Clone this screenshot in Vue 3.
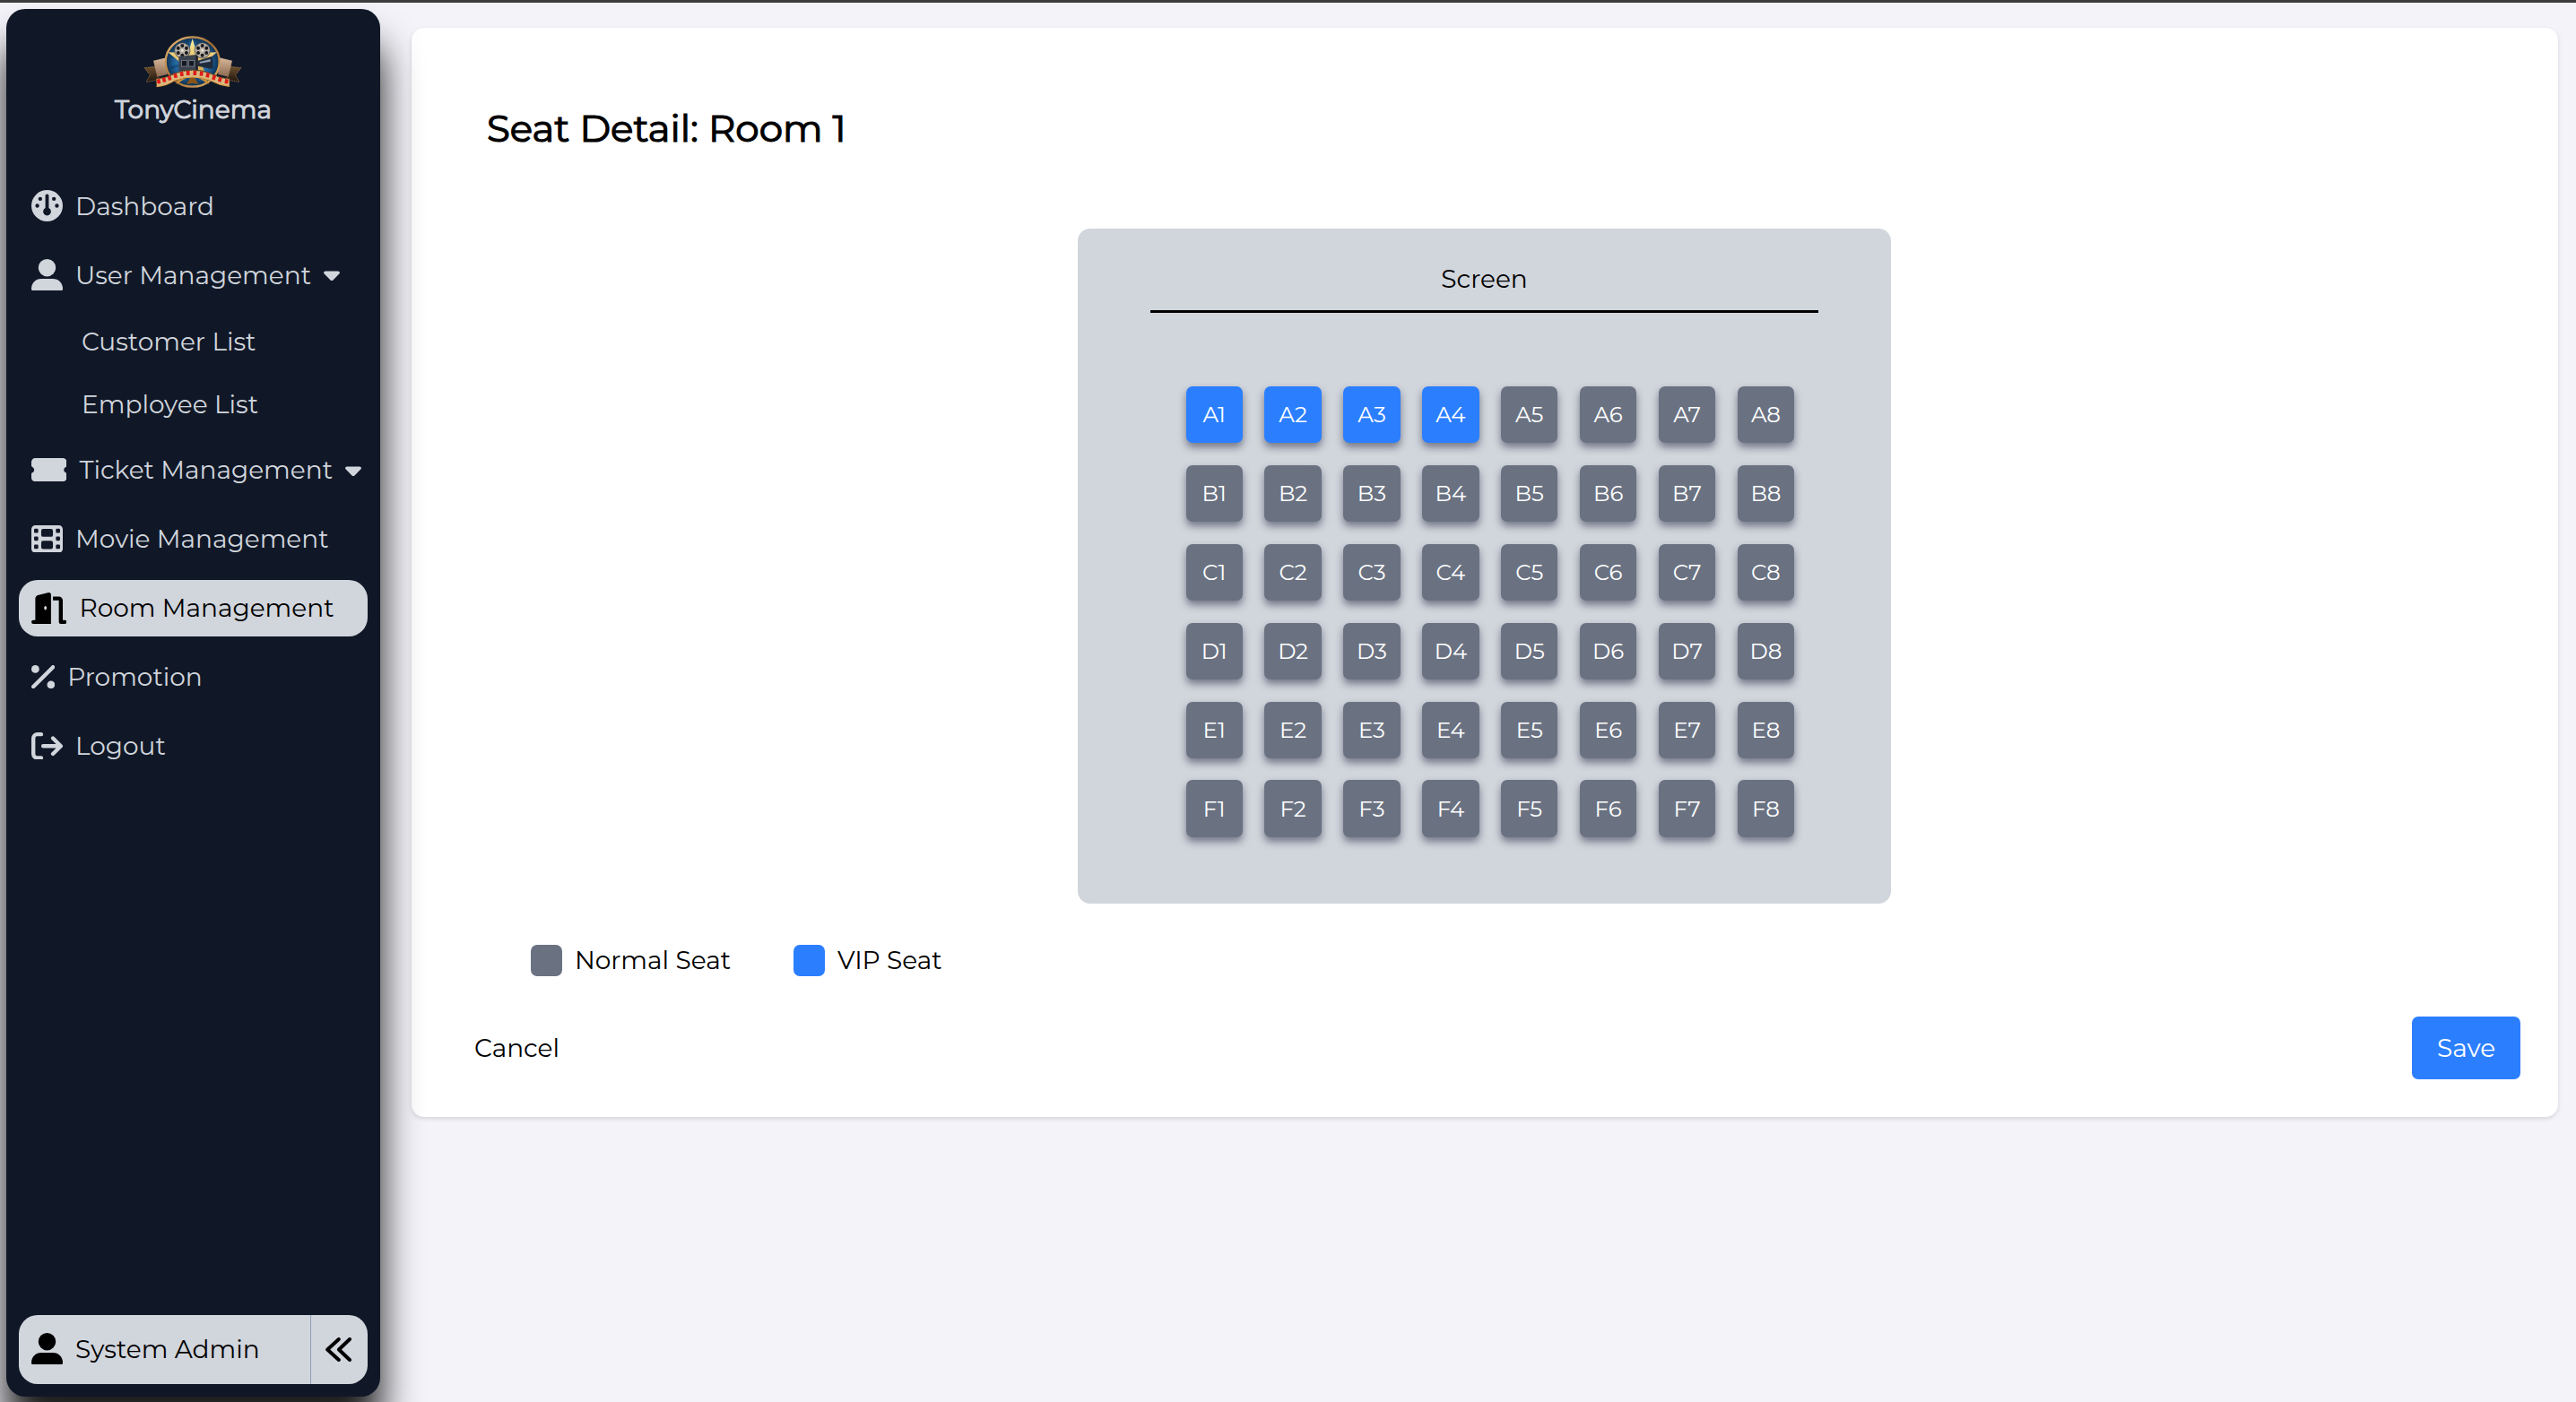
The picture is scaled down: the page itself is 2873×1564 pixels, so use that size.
<script setup>
const seatRows = ['A', 'B', 'C', 'D', 'E', 'F']
const seatCols = [1, 2, 3, 4, 5, 6, 7, 8]
const vipSeats = new Set(['A1', 'A2', 'A3', 'A4'])

const seats = seatRows.flatMap((row) =>
  seatCols.map((col) => ({ code: `${row}${col}`, vip: vipSeats.has(`${row}${col}`) }))
)

// Film strip frames following the arc of the logo ribbon
const frames = [
  [111, 195, -10], [129, 190, -14], [147, 184, -16], [167, 176, -14], [188, 170, -9], [209, 167, -3],
  [232, 167, 2], [254, 169, 7], [275, 174, 12], [296, 182, 16], [316, 189, 14], [338, 195, 10]
]
const rays = [0, 30, 60, 90, 120, 150, 180, 210, 240, 270, 300, 330]
const reelHoles = [0, 60, 120, 180, 240, 300]
</script>

<template>
  <div class="page">
    <aside class="sidebar">
      <div class="brand">
        <svg class="logo" viewBox="60 40 330 180">
          <defs>
            <linearGradient id="gold" x1="0" y1="0" x2="1" y2="1">
              <stop offset="0" stop-color="#f0c078" />
              <stop offset=".5" stop-color="#a06a30" />
              <stop offset="1" stop-color="#e8b870" />
            </linearGradient>
            <linearGradient id="star" x1="0" y1="0" x2="0" y2="1">
              <stop offset="0" stop-color="#fff0a0" />
              <stop offset="1" stop-color="#c98a30" />
            </linearGradient>
            <radialGradient id="sky">
              <stop offset="0" stop-color="#4fa0dc" />
              <stop offset=".7" stop-color="#1f5f96" />
              <stop offset="1" stop-color="#0e2c4a" />
            </radialGradient>
            <linearGradient id="tail" x1="0" y1="0" x2="0" y2="1">
              <stop offset="0" stop-color="#6a4e2e" />
              <stop offset="1" stop-color="#20160e" />
            </linearGradient>
            <linearGradient id="ticket" x1="0" y1="0" x2="0" y2="1">
              <stop offset="0" stop-color="#d8b89a" />
              <stop offset="1" stop-color="#8c6a50" />
            </linearGradient>
          </defs>
          <path d="M63 150L100 146L112 190L70 197L82 174Z" fill="url(#tail)" stroke="#b08850" stroke-width="2" stroke-dasharray="4 2" />
          <path d="M387 150L350 146L338 190L380 197L368 174Z" fill="url(#tail)" stroke="#b08850" stroke-width="2" stroke-dasharray="4 2" />
          <path d="M93 126L140 115V172L106 180Z" fill="url(#ticket)" />
          <path d="M357 126L310 115V172L344 180Z" fill="url(#ticket)" />
          <ellipse cx="224" cy="130" rx="90" ry="83" fill="url(#sky)" stroke="url(#gold)" stroke-width="7" />
          <path v-for="r in rays" :key="r" d="M224 130L219 54L229 54Z" fill="#0c3358" opacity=".45" :transform="`rotate(${r + 15} 224 130)`" />
          <path d="M224 52L238 100L306 98L256 140L278 204L224 172L170 204L192 140L142 98L210 100Z" fill="url(#star)" />
          <path d="M224 172L203 206Q224 196 245 206Z" fill="#8a5518" />
          <g v-for="cx in [190, 257]" :key="cx">
            <circle :cx="cx" cy="92" r="26" fill="#b5aea4" stroke="#3a3634" stroke-width="2" />
            <circle v-for="h in reelHoles" :key="h" :cx="cx" cy="76" r="6" fill="#1c1b20" :transform="`rotate(${h} ${cx} 92)`" />
            <circle :cx="cx" cy="92" r="4" fill="#f0e8dc" />
          </g>
          <path d="M178 112L236 106L242 112V160H178Z" fill="#3c4350" />
          <path d="M236 106L242 112V160L236 162Z" fill="#171b24" />
          <rect x="187" y="126" width="19" height="19" fill="#141821" stroke="#8b93a0" stroke-width="2" />
          <rect x="211" y="126" width="19" height="19" fill="#141821" stroke="#8b93a0" stroke-width="2" />
          <path d="M242 126L288 112Q298 134 288 154L242 144Z" fill="#202b3c" />
          <path d="M248 130L284 121V129L248 135Z" fill="#8e9eb2" />
          <path d="M102 186Q135 184 165 168Q224 146 284 168Q315 184 348 186V213Q315 210 282 192Q224 172 167 192Q135 212 104 214Z" fill="#d9ba80" stroke="#4c3216" stroke-width="2" />
          <path d="M104 213Q135 211 167 191Q224 171 282 191Q315 209 348 212" fill="none" stroke="#e7a24c" stroke-width="3" />
          <path d="M103 187Q135 185 165 169Q224 147 284 169Q315 185 347 187" fill="none" stroke="#5a4326" stroke-width="4" stroke-dasharray="3 3" />
          <rect v-for="f in frames" :key="f[0]" :x="f[0] - 5.5" :y="f[1] - 7" width="11" height="15" fill="#e01c18" :transform="`rotate(${f[2]} ${f[0]} ${f[1]})`" />
        </svg>
        <h1 class="brand-name">TonyCinema</h1>
      </div>

      <nav class="menu">
        <a class="item">
          <svg width="35" height="35" viewBox="0 0 512 512">
            <path fill="currentColor" fill-rule="evenodd" d="M256 0a256 256 0 1 1 0 512a256 256 0 1 1 0-512ZM112 144a32 32 0 1 0 64 0a32 32 0 1 0-64 0ZM336 144a32 32 0 1 0 64 0a32 32 0 1 0-64 0ZM64 256a32 32 0 1 0 64 0a32 32 0 1 0-64 0ZM384 256a32 32 0 1 0 64 0a32 32 0 1 0-64 0ZM256 64c-15 0-28 11-28 26V294a64 64 0 1 0 56 0V90c0-15-13-26-28-26Z" />
          </svg>
          <span>Dashboard</span>
        </a>
        <a class="item">
          <svg width="35" height="35" viewBox="0 0 512 512">
            <g fill="currentColor">
              <circle cx="256" cy="142" r="142" />
              <path d="M0 482C0 392 70 322 160 322H352C442 322 512 392 512 482V490C512 504 504 512 490 512H22C8 512 0 504 0 490Z" />
            </g>
          </svg>
          <span>User Management</span>
          <svg class="caret" width="18" height="12" viewBox="0 0 18 12"><path fill="currentColor" d="M2 .5H16C17.8.5 18.5 2.4 17.3 3.6L10.5 10.4C9.6 11.3 8.4 11.3 7.5 10.4L.7 3.6C-.5 2.4.2.5 2 .5Z" /></svg>
        </a>
        <div class="submenu">
          <a class="subitem">Customer List</a>
          <a class="subitem">Employee List</a>
        </div>
        <a class="item">
          <svg width="39.4" height="26.25" viewBox="0 0 576 384">
            <path fill="currentColor" d="M64 0H512a64 64 0 0 1 64 64V126c0 9-7 15-15 19a51 51 0 0 0 0 94c8 4 15 10 15 19v62a64 64 0 0 1-64 64H64a64 64 0 0 1-64-64V258c0-9 7-15 15-19a51 51 0 0 0 0-94C7 141 0 135 0 126V64A64 64 0 0 1 64 0Z" />
          </svg>
          <span>Ticket Management</span>
          <svg class="caret" width="18" height="12" viewBox="0 0 18 12"><path fill="currentColor" d="M2 .5H16C17.8.5 18.5 2.4 17.3 3.6L10.5 10.4C9.6 11.3 8.4 11.3 7.5 10.4L.7 3.6C-.5 2.4.2.5 2 .5Z" /></svg>
        </a>
        <a class="item">
          <svg width="35" height="30.6" viewBox="0 0 512 448">
            <path fill="currentColor" fill-rule="evenodd" d="M64 0H448a64 64 0 0 1 64 64V384a64 64 0 0 1-64 64H64a64 64 0 0 1-64-64V64A64 64 0 0 1 64 0ZM60 56a16 16 0 0 0-16 16v36a16 16 0 0 0 16 16h36a16 16 0 0 0 16-16V72a16 16 0 0 0-16-16ZM60 184a16 16 0 0 0-16 16v36a16 16 0 0 0 16 16h36a16 16 0 0 0 16-16v-36a16 16 0 0 0-16-16ZM60 316a16 16 0 0 0-16 16v36a16 16 0 0 0 16 16h36a16 16 0 0 0 16-16v-36a16 16 0 0 0-16-16ZM416 56a16 16 0 0 0-16 16v36a16 16 0 0 0 16 16h36a16 16 0 0 0 16-16V72a16 16 0 0 0-16-16ZM416 184a16 16 0 0 0-16 16v36a16 16 0 0 0 16 16h36a16 16 0 0 0 16-16v-36a16 16 0 0 0-16-16ZM416 316a16 16 0 0 0-16 16v36a16 16 0 0 0 16 16h36a16 16 0 0 0 16-16v-36a16 16 0 0 0-16-16ZM192 60a32 32 0 0 0-32 32v64a32 32 0 0 0 32 32h128a32 32 0 0 0 32-32V92a32 32 0 0 0-32-32ZM192 252a32 32 0 0 0-32 32v72a32 32 0 0 0 32 32h128a32 32 0 0 0 32-32v-72a32 32 0 0 0-32-32Z" />
          </svg>
          <span>Movie Management</span>
        </a>
        <a class="item active">
          <svg width="39.4" height="35" viewBox="0 0 576 512">
            <g fill="currentColor">
              <path fill-rule="evenodd" d="M320 512H32a32 32 0 0 1 0-64H64V97c0-25 17-47 41-54L280 1c20-5 40 10 40 31ZM229 221c-12 0-21 14-21 32s9 32 21 32s21-14 21-32s-9-32-21-32Z" />
              <path d="M352 64H448a64 64 0 0 1 64 64V448H544a32 32 0 0 1 0 64H480a32 32 0 0 1-32-32V128H352Z" />
            </g>
          </svg>
          <span>Room Management</span>
        </a>
        <a class="item">
          <svg width="26.25" height="26.25" viewBox="0 0 384 384">
            <g fill="currentColor">
              <circle cx="64" cy="64" r="64" />
              <circle cx="320" cy="320" r="64" />
              <path d="M32 352L352 32" stroke="currentColor" stroke-width="64" stroke-linecap="round" />
            </g>
          </svg>
          <span>Promotion</span>
        </a>
        <a class="item">
          <svg width="35" height="30.6" viewBox="0 0 512 448">
            <path fill="none" stroke="currentColor" stroke-width="64" stroke-linecap="round" stroke-linejoin="round" d="M160 32H96A64 64 0 0 0 32 96V352A64 64 0 0 0 96 416H160M192 224H470M352 96L480 224L352 352" />
          </svg>
          <span>Logout</span>
        </a>
      </nav>

      <div class="account">
        <div class="account-user">
          <svg width="35" height="35" viewBox="0 0 512 512">
            <g fill="currentColor">
              <circle cx="256" cy="142" r="142" />
              <path d="M0 482C0 392 70 322 160 322H352C442 322 512 392 512 482V490C512 504 504 512 490 512H22C8 512 0 504 0 490Z" />
            </g>
          </svg>
          <span>System Admin</span>
        </div>
        <button class="collapse" aria-label="Collapse">
          <svg width="29" height="27" viewBox="0 0 29 27">
            <path d="M14.8 2L2.2 13.5L14.8 25M27 2L15 13.5L27 25" fill="none" stroke="currentColor" stroke-width="4" stroke-linecap="round" stroke-linejoin="round" />
          </svg>
        </button>
      </div>
    </aside>

    <main class="content">
      <section class="card">
        <h2 class="title">Seat Detail: Room 1</h2>

        <div class="hall">
          <div class="screen">Screen</div>
          <div class="seats">
            <button v-for="s in seats" :key="s.code" class="seat" :class="{ vip: s.vip }">{{ s.code }}</button>
          </div>
        </div>

        <div class="legend">
          <div class="legend-item"><i class="swatch"></i>Normal Seat</div>
          <div class="legend-item"><i class="swatch vip"></i>VIP Seat</div>
        </div>

        <div class="actions">
          <button class="cancel">Cancel</button>
          <button class="save">Save</button>
        </div>
      </section>
    </main>
  </div>
</template>

<style>
body {
  margin: 0;
  background: #f3f3f9;
}
</style>

<style scoped>
.page {
  box-sizing: border-box;
  display: flex;
  align-items: flex-start;
  width: 100%;
  height: 1564px;
  padding: 7px 20px 0 7px;
  border-top: 3px solid #3c3c3c;
  background: #f3f3f9;
  overflow: hidden;
  font-family: Montserrat, Inter, sans-serif;
  font-size: 28px;
  line-height: 42px;
  color: #000;
}

button {
  border: 0;
  padding: 0;
  background: none;
  color: inherit;
  font: inherit;
}

.sidebar {
  position: relative;
  z-index: 1;
  box-sizing: border-box;
  flex: none;
  display: flex;
  flex-direction: column;
  width: 417px;
  height: 1548px;
  padding: 28px 14px 14px;
  border-radius: 21px;
  background: #101827;
  color: #d1d5dc;
  box-shadow: 0 40px 44px rgba(0, 0, 0, 0.9);
}

.brand {
  display: flex;
  flex-direction: column;
  align-items: center;
  height: 160px;
}

.logo {
  width: 110px;
  height: 60px;
  margin: 1px 1px 0 0;
}

.brand-name {
  margin: 2px 0 0;
  font-size: 28px;
  font-weight: 400;
  line-height: 42px;
  -webkit-text-stroke: 1px currentColor;
}

.menu {
  display: flex;
  flex-direction: column;
}

.item {
  box-sizing: border-box;
  display: flex;
  align-items: center;
  gap: 14px;
  height: 63px;
  margin-bottom: 14px;
  padding: 0 14px;
  border-radius: 21px;
  white-space: nowrap;
}

.item svg {
  flex: none;
}

.item .caret {
  margin: 3px 0 0;
}

.item.active {
  background: #d1d5dc;
  color: #000;
}

.submenu {
  display: flex;
  flex-direction: column;
  margin: -6px 0 6.55px;
  padding-left: 70px;
}

.subitem {
  height: 70px;
  line-height: 70px;
}

.account {
  display: flex;
  height: 77px;
  margin-top: auto;
  border-radius: 21px;
  background: #d1d5dc;
  color: #000;
}

.account-user {
  box-sizing: border-box;
  display: flex;
  align-items: center;
  gap: 14px;
  width: 325px;
  padding: 0 0 2px 14px;
}

.collapse {
  box-sizing: border-box;
  display: flex;
  flex: 1;
  align-items: center;
  justify-content: center;
  padding: 0 2px 1px 0;
  border-left: 1px solid #90a1b9;
}

.content {
  flex: 1;
  padding: 21px 0 0 35px;
}

.card {
  box-sizing: border-box;
  display: flex;
  flex-direction: column;
  height: 1215px;
  padding: 80px 42px 42px;
  border-radius: 14px;
  background: #fff;
  box-shadow: 0 2px 5px rgba(0, 0, 0, 0.13);
}

.title {
  margin: 0 0 0 42px;
  font-size: 42px;
  font-weight: 400;
  line-height: 64px;
  -webkit-text-stroke: 1.2px currentColor;
}

.hall {
  box-sizing: border-box;
  align-self: center;
  width: 907px;
  height: 753px;
  margin: 80px 1px 0 0;
  padding: 35px 81px 0;
  border-radius: 14px;
  background: #d1d5dc;
}

.screen {
  height: 56px;
  border-bottom: 3px solid #000;
  text-align: center;
}

.seats {
  display: grid;
  grid-template-columns: repeat(8, 63.4px);
  grid-auto-rows: 63.4px;
  gap: 24.5px;
  margin: 82px 0 0 39.5px;
}

.seat {
  border-radius: 7px;
  background: #6a7282;
  color: #fff;
  font-size: 24.5px;
  line-height: 35px;
  box-shadow: 0 5px 9px rgba(25, 30, 55, 0.5);
}

.vip {
  background: #2b7fff;
}

.legend {
  display: flex;
  gap: 70px;
  margin: 42px 0 0 91px;
}

.legend-item {
  display: flex;
  align-items: center;
  gap: 14px;
}

.swatch {
  width: 35px;
  height: 35px;
  border-radius: 7px;
  background: #6a7282;
}

.swatch.vip {
  background: #2b7fff;
}

.actions {
  display: flex;
  justify-content: space-between;
  align-items: center;
  height: 70px;
  margin-top: auto;
}

.cancel {
  padding-left: 28px;
}

.save {
  width: 121px;
  height: 70px;
  border-radius: 7px;
  background: #2b7fff;
  color: #fff;
}
</style>
